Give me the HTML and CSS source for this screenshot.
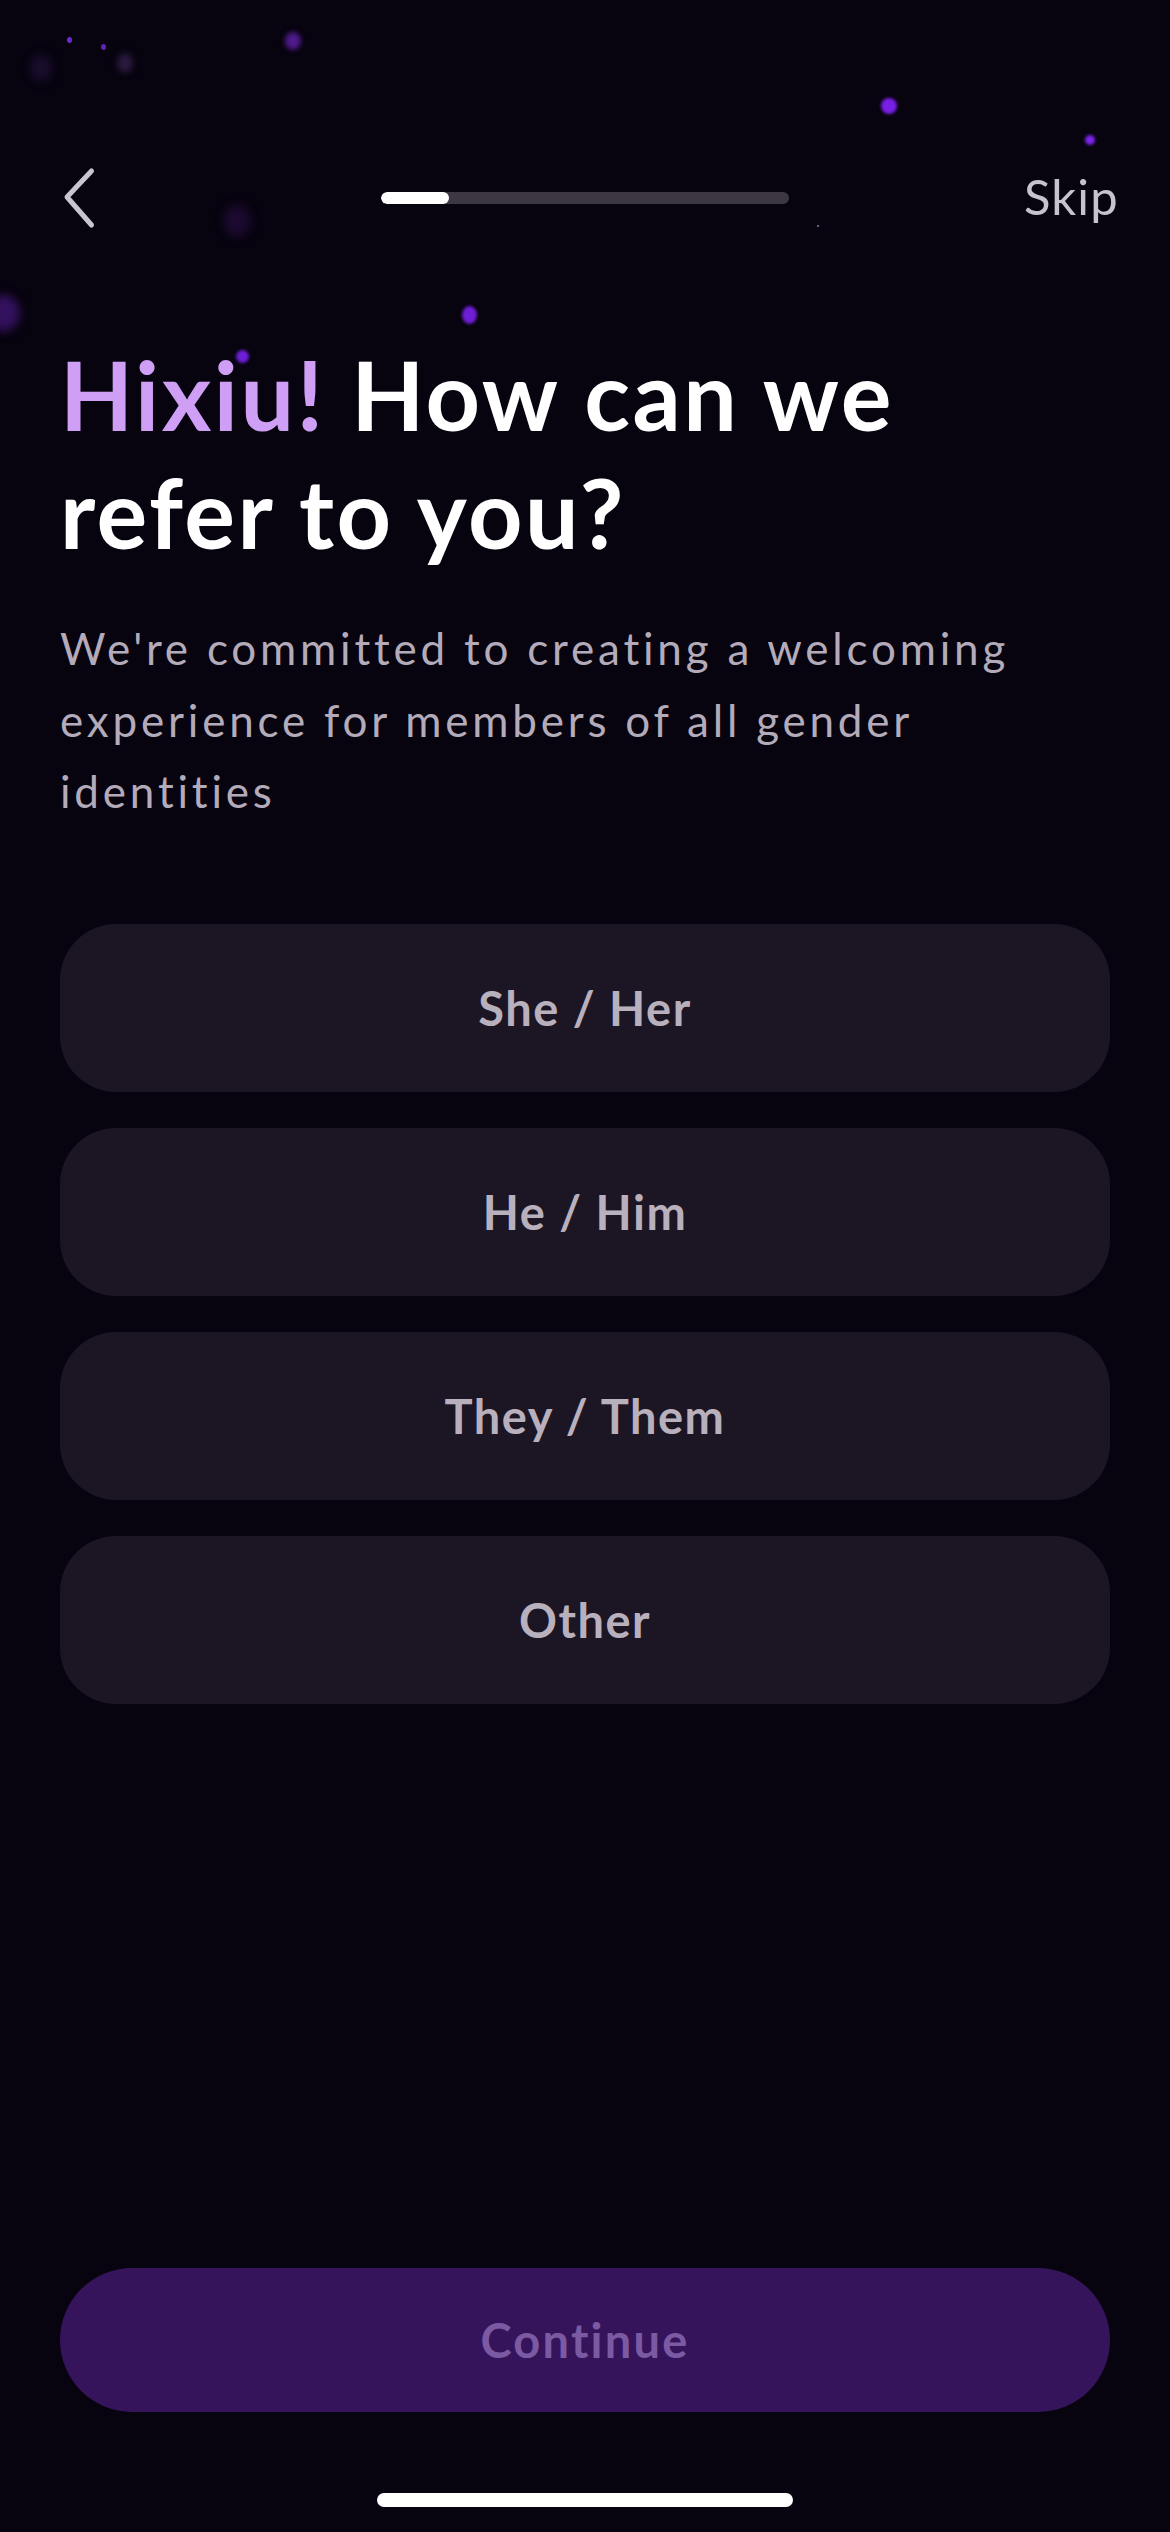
FILE: index.html
```html
<!DOCTYPE html>
<html lang="en">
<head>
<meta charset="utf-8">
<title>Pronouns</title>
<link rel="stylesheet" href="styles.css">
</head>
<body>
<div class="screen">
  <div class="particles">
    <span class="p p1"></span>
    <span class="p p2"></span>
    <span class="p p3"></span>
    <span class="p p4"></span>
    <span class="p p5"></span>
    <span class="p p6"></span>
    <span class="p p7"></span>
    <span class="p p8"></span>
    <span class="p p9"></span>
    <span class="p p10"></span>
    <span class="p p11"></span>
    <span class="p p12"></span>
  </div>

  <header class="topbar">
    <div class="back">
      <svg class="chevron" viewBox="0 0 40 64" width="40" height="64" aria-hidden="true">
        <path d="M31.5 5 L7 31 L31.5 59" fill="none" stroke="#c9c4cd" stroke-width="5" stroke-linecap="round" stroke-linejoin="round"/>
      </svg>
    </div>
    <div class="progress"><div class="progress-fill"></div></div>
    <div class="skip">Skip</div>
  </header>

  <h1 class="title">
    <span class="title-line"><span class="accent">Hixiu!</span> How can we</span>
    <span class="title-line">refer to you?</span>
  </h1>
  <p class="subtitle">We're committed to creating a welcoming experience for members of all gender identities</p>

  <div class="options">
    <div class="option">She / Her</div>
    <div class="option">He / Him</div>
    <div class="option">They / Them</div>
    <div class="option">Other</div>
  </div>

  <div class="spacer"></div>

  <div class="continue">Continue</div>
  <div class="home-indicator"></div>
</div>
</body>
</html>
```
FILE: styles.css
```css
* { box-sizing: border-box; }
html, body {
  margin: 0;
  padding: 0;
  background: #07030f;
}
.screen {
  position: relative;
  width: 1170px;
  height: 2532px;
  overflow: hidden;
  background: #07030f;
  display: flex;
  flex-direction: column;
  padding: 0 60px;
  font-family: "Lato", "Noto Sans", sans-serif;
}

/* decorative floating particles */
.particles { position: absolute; inset: 0; pointer-events: none; }
.p {
  position: absolute;
  border-radius: 50%;
  background: #7a22e6;
  filter: blur(1.5px);
}
.p1 { left: 285px; top: 32px; width: 16px; height: 18px; background: #4f1a8c; filter: blur(2.5px); }
.p2 { left: 881px; top: 98px; width: 16px; height: 16px; background: #7a1fe6; }
.p3 { left: 1085px; top: 135px; width: 10px; height: 10px; background: #7c24ea; }
.p4 { left: 462px; top: 306px; width: 15px; height: 18px; background: #6f1ed6; }
.p5 { left: 67px; top: 37px; width: 5px; height: 6px; background: #6a2ad0; filter: none; }
.p6 { left: 101px; top: 44px; width: 5px; height: 6px; background: #5d22b8; filter: none; }
.p7 { left: 117px; top: 53px; width: 16px; height: 20px; background: #2a1a3e; filter: blur(3px); }
.p8 { left: 30px; top: 55px; width: 22px; height: 26px; background: #1a0c2c; filter: blur(4px); }
.p9 { left: 224px; top: 205px; width: 26px; height: 32px; background: #1c0a30; filter: blur(5px); }
.p10 { left: -14px; top: 295px; width: 34px; height: 36px; background: #33115e; filter: blur(5px); }
.p11 { left: 236px; top: 350px; width: 13px; height: 13px; background: #6d1ed8; }
.p12 { left: 817px; top: 225px; width: 2px; height: 2px; background: #8a8494; filter: none; }

.topbar {
  position: relative;
  margin-top: 150px;
  height: 96px;
  display: grid;
  grid-template-columns: 1fr 408px 1fr;
  align-items: center;
}
.back { display: flex; align-items: center; }
.chevron { display: block; }
.progress {
  height: 12px;
  border-radius: 6px;
  background: #3d3743;
  overflow: hidden;
}
.progress-fill {
  width: 68px;
  height: 100%;
  border-radius: 6px;
  background: #ffffff;
}
.skip {
  justify-self: end;
  margin-right: -9px;
  color: #c7c2cb;
  font-size: 49px;
  font-weight: 400;
  letter-spacing: 1.2px;
  line-height: 1;
  padding-bottom: 4px;
}

.title {
  position: relative;
  margin: 89px 0 0;
  font-size: 95px;
  line-height: 118px;
  font-weight: 700;
  color: #ffffff;
  letter-spacing: 2.5px;
}
.title-line { display: block; white-space: nowrap; }
.accent { color: #cf9ef5; }

.subtitle {
  position: relative;
  max-width: 1010px;
  margin: 42px 0 0;
  font-size: 44px;
  line-height: 71.5px;
  letter-spacing: 3.8px;
  color: #b3abb9;
  font-weight: 400;
}

.options {
  position: relative;
  margin-top: 96px;
  display: flex;
  flex-direction: column;
  gap: 36px;
}
.option {
  height: 168px;
  border-radius: 56px;
  background: #1c1624;
  color: #b8b0bd;
  font-size: 47px;
  font-weight: 700;
  letter-spacing: 1.5px;
  display: flex;
  align-items: center;
  justify-content: center;
}

.spacer { flex: 1; }

.continue {
  position: relative;
  height: 144px;
  border-radius: 72px;
  background: #36145b;
  color: #7b5aa3;
  font-size: 47px;
  font-weight: 700;
  letter-spacing: 2.2px;
  display: flex;
  align-items: center;
  justify-content: center;
}
.home-indicator {
  align-self: center;
  margin-top: 81px;
  margin-bottom: 25px;
  width: 416px;
  height: 14px;
  border-radius: 7px;
  background: #ffffff;
}
```
